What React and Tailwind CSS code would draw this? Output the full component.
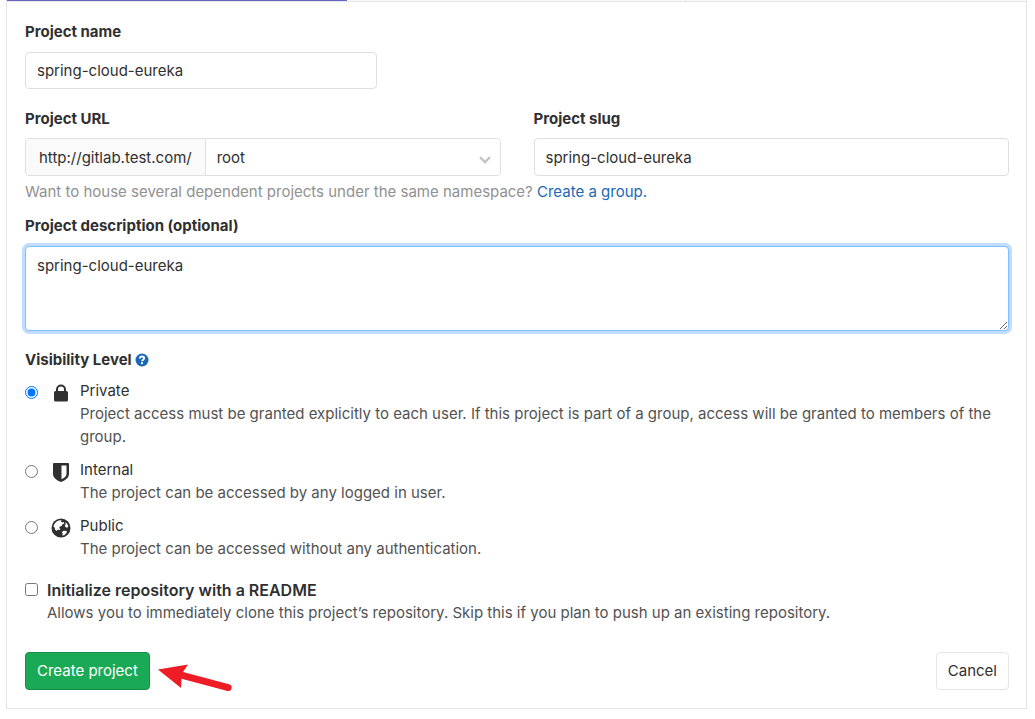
import React, { useState } from "react";
import clsx from "clsx";

const LockIcon = () => (
  <svg viewBox="0 0 16 18" width="16" height="18" fill="currentColor" aria-hidden="true">
    <path
      fillRule="evenodd"
      d="M3 7V5.500a5 5 0 0 1 10 0V7h.5A1.500 1.500 0 0 1 15 8.500V16a1.500 1.500 0 0 1-1.500 1.500h-11A1.500 1.500 0 0 1 1 16V8.500A1.500 1.500 0 0 1 2.500 7H3zm2 0h6V5.500a3 3 0 0 0-6 0V7z"
    />
  </svg>
);

const ShieldIcon = () => (
  <svg viewBox="0 0 16 19" width="16" height="19" fill="currentColor" aria-hidden="true">
    <path
      fillRule="evenodd"
      d="M1 0h14a1 1 0 0 1 1 1v9.500c0 4-3 6.500-8 8.500-5-2-8-4.500-8-8.500V1a1 1 0 0 1 1-1zm7.500 2.500v13.700c3.500-1.600 5-3.200 5-5.700v-8h-5z"
    />
  </svg>
);

const EarthIcon = () => (
  <svg viewBox="0 0 20 20" width="20" height="20" aria-hidden="true">
    <circle cx="10" cy="10" r="9.500" fill="currentColor" />
    <path
      fill="#fff"
      d="M2.500 8.800C2.900 6 4.600 3.700 7 2.700l3.400-.7-.5 1.600 1.500.9 1.500-.6.3 1.500-2 1.200-.5 1.500-1.700.3-1 1.500 1.300.9-.6 1.400-1.900-.7-1.300 1.500-1.500-1.500-.3-1.900z"
    />
    <path fill="#fff" d="M14.300 4.300c1.500 1 2.600 2.400 3.100 4.200l-1.300 1.300-1.400-.6-1-1.800 1-1.200zM10.800 14.200l1.700-1.500 3.400.4-.4 1.800-2.300 2.300-2 .2.600-1.800z" />
  </svg>
);

const HelpIcon = () => (
  <svg viewBox="0 0 14 14" width="14" height="14" aria-hidden="true">
    <circle cx="7" cy="7" r="6.500" fill="currentColor" />
    <path
      d="M4.800 5.500c0-1.300.9-2 2.200-2s2.200.7 2.200 1.800c0 1.400-2.100 1.400-2.100 2.900"
      fill="none"
      stroke="#fff"
      strokeWidth="1.800"
    />
    <circle cx="7" cy="10.200" r="1.100" fill="#fff" />
  </svg>
);

const levels = [
  {
    id: "private",
    name: "Private",
    icon: <LockIcon />,
    text: "Project access must be granted explicitly to each user. If this project is part of a group, access will be granted to members of the group.",
  },
  {
    id: "internal",
    name: "Internal",
    icon: <ShieldIcon />,
    text: "The project can be accessed by any logged in user.",
  },
  {
    id: "public",
    name: "Public",
    icon: <EarthIcon />,
    text: "The project can be accessed without any authentication.",
  },
];

const inputClass =
  "block rounded border border-[#dfdfdf] bg-white px-[11px] outline-none focus:border-[#80bdff] focus:ring-3 focus:ring-[#bfdeff]";

const Label = ({ htmlFor, className, children }) => (
  <label htmlFor={htmlFor} className={clsx("block font-bold", className)}>
    {children}
  </label>
);

const Tabs = () => (
  <div className="grid h-px grid-cols-3 bg-[#fafafa]">
    <div className="bg-[#6666c4]" />
    <div className="border-r border-[#e5e5e5]" />
    <div />
  </div>
);

const App = () => {
  const [name, setName] = useState("spring-cloud-eureka");
  const [slug, setSlug] = useState("spring-cloud-eureka");
  const [description, setDescription] = useState("spring-cloud-eureka");
  const [level, setLevel] = useState("private");

  return (
    <div className="bg-white pr-2 pb-3 pl-1.5 font-['Inter','Noto_Sans',sans-serif] text-[15px] leading-[22px] text-[#303030]">
      <div className="border-x border-b border-[#e5e5e5]">
        <Tabs />
        <form
          className="border-t border-[#e5e5e5] pt-[19px] pr-[17px] pb-[17px] pl-[18px]"
          onSubmit={(event) => event.preventDefault()}
        >
          <Label htmlFor="name">Project name</Label>
          <input
            id="name"
            value={name}
            onChange={(event) => setName(event.target.value)}
            className={clsx(inputClass, "mt-[9px] h-[37px] w-[352px] max-w-full")}
          />

          <div className="mt-[19px] grid grid-cols-2 gap-x-[33px]">
            <div>
              <Label htmlFor="namespace">Project URL</Label>
              <div className="mt-2 flex h-[38px] rounded border border-[#dfdfdf]">
                <div className="flex items-center rounded-l border-r border-[#dfdfdf] bg-[#fafafa] px-[13px] pt-px">
                  http://gitlab.test.com/
                </div>
                <div className="relative flex-1">
                  <select
                    id="namespace"
                    className="h-full w-full appearance-none rounded-r bg-white px-[11px] pt-px outline-none"
                  >
                    <option>root</option>
                  </select>
                  <svg
                    viewBox="0 0 12 8"
                    width="12"
                    height="8"
                    className="pointer-events-none absolute top-[17px] right-[9px]"
                    aria-hidden="true"
                  >
                    <path d="m1 1.200 5 5 5-5" fill="none" stroke="#c4c4c4" strokeWidth="2.400" />
                  </svg>
                </div>
              </div>
            </div>
            <div>
              <Label htmlFor="slug">Project slug</Label>
              <input
                id="slug"
                value={slug}
                onChange={(event) => setSlug(event.target.value)}
                className={clsx(inputClass, "mt-2 h-[38px] w-full")}
              />
            </div>
          </div>
          <p className="mt-[5px] text-[#919191]">
            Want to house several dependent projects under the same namespace?{" "}
            <a href="#group" className="text-[#1b69b6]">
              Create a group.
            </a>
          </p>

          <Label htmlFor="description" className="mt-3">
            Project description (optional)
          </Label>
          <textarea
            id="description"
            value={description}
            onChange={(event) => setDescription(event.target.value)}
            className="mt-[9px] block h-[85px] w-full rounded border border-[#80bdff] bg-white px-[11px] py-2 ring-3 ring-[#bfdeff] outline-none"
          />

          <fieldset className="mt-[18px]">
            <legend className="flex items-center gap-[3px] font-bold">
              Visibility Level
              <a href="#help" aria-label="Help" className="text-[#1b69b6]">
                <HelpIcon />
              </a>
            </legend>
            <div className="mt-[9px] flex flex-col gap-[11px]">
              {levels.map((item) => (
                <div key={item.id} className="flex items-start">
                  <input
                    type="radio"
                    id={item.id}
                    name="visibility"
                    checked={level === item.id}
                    onChange={() => setLevel(item.id)}
                    className="mt-[6px] size-[13px] shrink-0"
                  />
                  <label htmlFor={item.id} className="flex">
                    <span className="mr-[9px] ml-[13px] flex h-[26px] w-5 shrink-0 items-center justify-center">
                      {item.icon}
                    </span>
                    <span>
                      <span className="block">{item.name}</span>
                      <span className="block leading-[23px] text-[#525252]">{item.text}</span>
                    </span>
                  </label>
                </div>
              ))}
            </div>
          </fieldset>

          <div className="mt-[19px] flex items-start gap-[9px]">
            <input type="checkbox" id="readme" className="mt-1 size-[13px] shrink-0" />
            <label htmlFor="readme">
              <span className="block text-base leading-[22px] font-semibold">
                Initialize repository with a README
              </span>
              <span className="block leading-[23px] text-[#525252]">
                Allows you to immediately clone this project’s repository. Skip this if you plan to
                push up an existing repository.
              </span>
            </label>
          </div>

          <div className="mt-7 flex items-start">
            <button
              type="submit"
              className="h-[38px] rounded border border-[#168f48] bg-[#1aaa55] px-[11px] text-white"
            >
              Create project
            </button>
            <svg viewBox="0 0 76 30" width="76" height="30" className="mt-[9px] ml-2" aria-hidden="true">
              <path
                d="M0 8.500 30 3.500 25 11 71 23.200a3.400 3.400 0 0 1-1.500 6.700L23.500 17.700 23 27z"
                fill="#ee1c25"
              />
            </svg>
            <button
              type="button"
              className="ml-auto h-[38px] rounded border border-[#e5e5e5] bg-white px-[11px]"
            >
              Cancel
            </button>
          </div>
        </form>
      </div>
    </div>
  );
};

export default App;
